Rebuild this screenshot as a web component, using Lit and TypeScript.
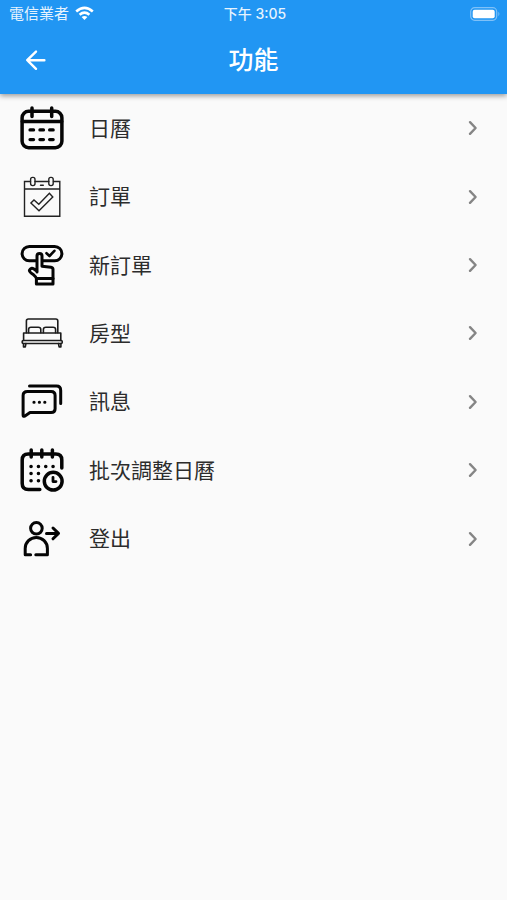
import { LitElement, html, css, svg } from "lit";
import { customElement } from "lit/decorators.js";

const items = [
  {
    label: "日曆",
    icon: svg`<g stroke-width="3.5">
      <rect x="4.1" y="7.3" width="39.8" height="36.4" rx="6.5"/>
      <path d="M4.3 17.6H43.7M14 4V12.4M33.7 4V12.4"/>
      <path d="M12 25.9H15.6M21.9 25.9H25.5M31.6 25.9H35.2M12 35.6H15.6M21.9 35.6H25.5M31.6 35.6H35.2" stroke-width="3.2"/>
    </g>`,
  },
  {
    label: "訂單",
    icon: svg`<g stroke-width="1.4" stroke="#222" stroke-linejoin="miter">
      <path d="M12.5 8.5H6.5V43.3H41.8V8.5H35.5M17 8.5H30.8M6.5 16H41.8M22.5 12.3H25.3"/>
      <rect x="12.6" y="4.4" width="4.4" height="8.2" rx="2"/>
      <rect x="30.8" y="4.4" width="4.4" height="8.2" rx="2"/>
      <path d="M12.9 30.1L16 27L20.8 31.2L31.4 20.3L34.8 23.9L21 37.8Z"/>
    </g>`,
  },
  {
    label: "新訂單",
    icon: svg`<g stroke-width="3">
      <rect x="4.1" y="5.4" width="39.8" height="14.4" rx="7.2"/>
      <path d="M28.5 12.2L31.5 15L36.4 9.8" stroke-width="2.6"/>
      <path d="M19 31V15A2.5 2.5 0 0 1 24 15V25.2L33 26.2Q35 26.5 35 28.5V43H18.4V37.5Q18 35.8 15.6 33.8Q11.4 31 11.4 29.4Q12.8 26.2 16 28L19 30.3" fill="#fafafa"/>
      <path d="M18.6 37.6H35"/>
    </g>`,
  },
  {
    label: "房型",
    icon: svg`<g stroke-width="1.6" stroke="#1c1c1c">
      <path d="M8.4 23.8V12Q8.4 10 10.4 10H37.8Q39.8 10 39.8 12V23.8"/>
      <path d="M10.6 23.8V20.4Q10.6 18.2 13 18.2H20.2Q22.8 18.2 22.8 20.4V23.8M25.4 23.8V20.4Q25.4 18.2 28 18.2H35Q37.6 18.2 37.6 20.4V23.8"/>
      <path d="M5.6 31.5V24H42.8V31.5"/>
      <rect x="4.2" y="31.5" width="40" height="3" rx="1"/>
      <path d="M5.5 34.5V37.9H7.3L7.9 34.5M42.9 34.5V37.9H41.1L40.5 34.5"/>
    </g>`,
  },
  {
    label: "訊息",
    icon: svg`<g stroke-width="3">
      <path d="M9.5 13.5H33.1Q37.1 13.5 37.1 17.5V30.7Q37.1 34.6 33.1 34.6H12L6.6 38.2Q5.1 38.8 5.1 37.1V17.5Q5.1 13.5 9.5 13.5Z"/>
      <path d="M11.5 8H38.5Q42.7 8 42.7 12.4V25.6"/>
      <path d="M15.9 24.3H16.1M21.3 24.3H21.5M26.7 24.3H26.9"/>
    </g>`,
  },
  {
    label: "批次調整日曆",
    icon: svg`<g stroke-width="3.5">
      <path d="M21.8 43.5H10.4Q4.2 43.5 4.2 37.5V14Q4.2 8 10.2 8H37.8Q43.8 8 43.8 14V22"/>
      <path d="M13.2 4V11M23.8 4V11M34.4 4V11"/>
      <path d="M13 20.4H13.1M20.4 20.4H20.5M27.7 20.4H27.8M35 20.4H35.1M13 27.5H13.1M20.4 27.5H20.5M13 34.7H13.1M20.4 34.7H20.5"/>
      <circle cx="35.2" cy="35.2" r="8.9"/>
      <path d="M35 31.3V35.6H38" stroke-width="2.8"/>
    </g>`,
  },
  {
    label: "登出",
    icon: svg`<g stroke-width="3">
      <circle cx="18.4" cy="13.3" r="5.8"/>
      <path d="M12.6 39.8H7.2V33.5A11.1 11.1 0 0 1 29.4 33.5V39.8H17.8"/>
      <path d="M28.5 18.4H40.3M35 13L40.5 18.4L35 23.8"/>
    </g>`,
  },
];

@customElement("app-root")
export class AppRoot extends LitElement {
  static styles = css`
    :host {
      display: block;
      min-height: 100vh;
      background: #fafafa;
      color: #2c2c2c;
      font-family: Roboto, "Noto Sans CJK TC", sans-serif;
    }
    header {
      position: relative;
      background: #2196f3;
      color: #fff;
      box-shadow: 0 2px 5px rgba(0, 0, 0, 0.38);
    }
    .status,
    .bar {
      display: grid;
      grid-template-columns: 1fr auto 1fr;
      align-items: center;
    }
    .status {
      height: 27px;
      padding: 0 6px 0 9px;
      font: 500 14px/20px Inter, "Noto Sans CJK TC", sans-serif;
      color: #e6f3fe;
    }
    .carrier {
      display: flex;
      align-items: center;
      gap: 6px;
      font-size: 15px;
      font-weight: 400;
    }
    .battery {
      justify-self: end;
    }
    .bar {
      height: 67px;
      padding: 0 16px;
    }
    .back {
      display: flex;
      width: 40px;
      height: 40px;
      padding: 0;
      border: 0;
      background: none;
      color: inherit;
      align-items: center;
      justify-content: center;
      cursor: pointer;
    }
    h1 {
      margin: 0;
      padding-top: 1px;
      font-size: 25px;
      line-height: 32px;
      font-weight: 500;
    }
    svg {
      display: block;
      flex: none;
      fill: none;
      stroke-linecap: round;
      stroke-linejoin: round;
    }
    ul {
      display: grid;
      grid-template-rows: repeat(7, 1fr);
      min-height: 479px;
      margin: 0;
      padding: 0;
      list-style: none;
    }
    .row {
      display: flex;
      align-items: center;
      gap: 23px;
      height: 100%;
      padding: 0 22px 0 18px;
      color: inherit;
      text-decoration: none;
      box-sizing: border-box;
    }
    .icon {
      stroke: #050505;
    }
    .label {
      flex: 1;
      padding-top: 1px;
      font-size: 21px;
      line-height: 28px;
    }
    .chevron {
      stroke: #858585;
    }
  `;

  render() {
    return html`
      <header>
        <div class="status">
          <span class="carrier">
            電信業者
            <svg width="19" height="15" viewBox="0 0 19 15" stroke="#fff" stroke-width="2.6" aria-hidden="true">
              <path d="M1.2 5.4Q9.5 -1.8 17.8 5.4M4.6 8.8Q9.5 4.6 14.4 8.8" stroke-linecap="butt" />
              <path d="M9.5 14L6.6 11Q9.5 8.8 12.4 11Z" fill="#fff" stroke="none" />
            </svg>
          </span>
          <time>下午 3:05</time>
          <svg class="battery" width="31" height="14" viewBox="0 0 31 14" aria-hidden="true">
            <rect x="0.7" y="0.7" width="26" height="12.6" rx="4" stroke="#7fc1f8" stroke-width="1.2" />
            <rect x="2.7" y="2.7" width="22" height="8.6" rx="2" fill="#fff" />
            <path d="M28.4 4.8Q30.4 7 28.4 9.2Z" fill="#7fc1f8" />
          </svg>
        </div>
        <div class="bar">
          <button class="back" aria-label="返回">
            <svg width="24" height="24" viewBox="0 0 24 24" stroke="#fff" stroke-width="2.4" aria-hidden="true">
              <path d="M20.4 11.2H3.5M12 2.6L3.2 11.2L12 19.8" />
            </svg>
          </button>
          <h1>功能</h1>
        </div>
      </header>
      <nav>
        <ul>
          ${items.map(
            (item) => html`<li>
              <a class="row" href="#">
                <svg class="icon" width="48" height="48" viewBox="0 0 48 48" aria-hidden="true">${item.icon}</svg>
                <span class="label">${item.label}</span>
                <svg class="chevron" width="24" height="24" viewBox="0 0 24 24" stroke-width="2.4" stroke-linecap="butt" aria-hidden="true">
                  <path d="M9 6.2L14.6 12L9 17.8" />
                </svg>
              </a>
            </li>`
          )}
        </ul>
      </nav>
    `;
  }
}
